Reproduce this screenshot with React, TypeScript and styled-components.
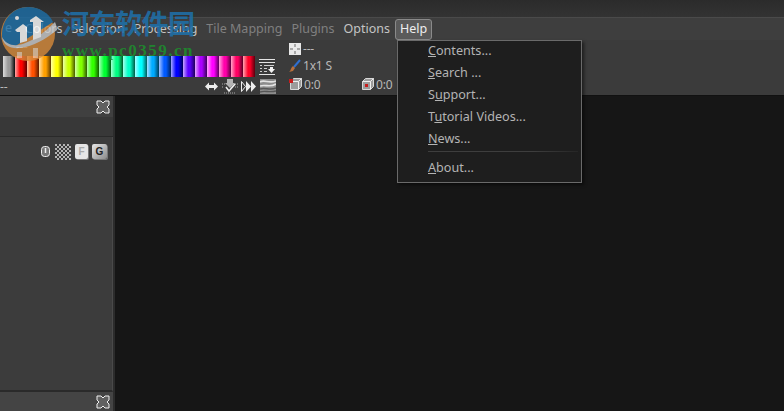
import React from "react";
import styled, { createGlobalStyle } from "styled-components";

const GlobalStyle = createGlobalStyle`
  html, body {
    margin: 0;
    padding: 0;
    background: #161616;
    overflow: hidden;
  }
  * { box-sizing: border-box; }
`;

const Window = styled.div`
  position: relative;
  width: 784px;
  height: 411px;
  overflow: hidden;
  display: flex;
  flex-direction: column;
  background: #161616;
  font-family: "Noto Sans", "Open Sans", sans-serif;
  font-size: 13px;
`;

const TitleBar = styled.div`
  height: 18px;
  flex: none;
  background: linear-gradient(#2b2b2b, #333333);
  border-bottom: 1px solid #4a4a4a;
`;

const MenuBar = styled.div`
  height: 22px;
  flex: none;
  display: flex;
  align-items: center;
  gap: 1px;
  padding-left: 21px;
  background: #3e3e3e;
  font-size: 12.5px;
`;

const MenuItem = styled.div<{ $dim?: boolean; $open?: boolean }>`
  height: 21px;
  padding: 0 ${(p) => (p.$open ? "4px" : "3px")};
  line-height: 18px;
  white-space: nowrap;
  color: ${(p) => (p.$open ? "#eeeeee" : p.$dim ? "#808080" : "#c4c4c4")};
  background: ${(p) => (p.$open ? "#5a5a5a" : "transparent")};
  border: 1px solid ${(p) => (p.$open ? "#8a8a8a" : "transparent")};
  border-radius: 3px;
`;

const ClippedMenuLabel = styled.span`
  position: absolute;
  left: 5px;
  top: 18px;
  line-height: 20px;
  font-size: 12.5px;
  color: #c4c4c4;
`;

const Toolbar = styled.div`
  height: 56px;
  flex: none;
  display: flex;
  background: #3b3b3b;
  border-bottom: 1px solid #111111;
  color: #b8b8b8;
  font-size: 12px;
`;

const PaletteBlock = styled.div`
  width: 289px;
  flex: none;
  display: flex;
  flex-direction: column;
`;

const TopDashes = styled.div`
  height: 16px;
  padding-left: 16px;
  line-height: 14px;
`;

const PaletteRow = styled.div`
  display: flex;
  align-items: center;
  height: 21px;
  padding-left: 3px;
`;

const Swatch = styled.div<{ $color: string; $end: string }>`
  width: 12px;
  height: 21px;
  flex: none;
  background: linear-gradient(
    to right,
    rgba(255, 255, 255, 0.65) 0%,
    rgba(255, 255, 255, 0) 42%,
    rgba(0, 0, 0, 0) 58%,
    ${(p) => p.$end} 100%
  ), ${(p) => p.$color};
`;

const ToolIcon = styled.svg<{ $gap?: number }>`
  flex: none;
  margin-left: ${(p) => p.$gap ?? 0}px;
`;

const ActionRow = styled.div`
  display: flex;
  align-items: center;
  height: 17px;
  margin-top: 1px;
`;

const LeftDashes = styled.span`
  margin-right: auto;
  line-height: 14px;
`;

const Actions = styled.div`
  display: flex;
  align-items: center;
  padding-right: 13px;
`;

const InfoBlock = styled.div`
  display: flex;
  flex-direction: column;
`;

const InfoRow = styled.div`
  height: 17px;
  display: flex;
  align-items: center;
  gap: 2px;
  line-height: 17px;
  letter-spacing: -0.2px;

  &:last-child {
    margin-top: 2px;
    gap: 0;
  }
`;

const InfoCell = styled.div`
  width: 72px;
  display: flex;
  align-items: center;
  gap: 2px;
`;

const Body = styled.div`
  flex: 1;
  display: flex;
  min-height: 0;
`;

const SidePanel = styled.div`
  width: 115px;
  flex: none;
  display: flex;
  flex-direction: column;
  background: #3d3d3d;
  border-right: 2px solid #2c2c2c;
`;

const PanelHeader = styled.div`
  height: 21px;
  flex: none;
  display: flex;
  align-items: center;
  justify-content: flex-end;
  padding-right: 3px;
  background: #404040;
`;

const PanelStrip = styled.div`
  height: 20px;
  flex: none;
  background: #383838;
  border-bottom: 1px solid #2a2a2a;
`;

const PanelContent = styled.div`
  flex: 1;
  display: flex;
  justify-content: flex-end;
  align-items: flex-start;
  gap: 4px;
  padding: 7px 5px 0 0;
  background: #3c3c3c;
  border-right: 1px solid #4a4a4a;
  border-bottom: 2px solid #2a2a2a;
`;

const PanelFooter = styled(PanelHeader)`
  height: 19px;
  background: #444444;
`;

const MainArea = styled.div`
  flex: 1;
  background: #161616;
`;

const Dropdown = styled.div`
  position: absolute;
  left: 397px;
  top: 40px;
  width: 185px;
  height: 143px;
  background: #1e1e1e;
  border: 1px solid #6a6a6a;
  box-shadow: 2px 2px 3px rgba(0, 0, 0, 0.5);
`;

const DropdownItem = styled.div`
  height: 22px;
  padding-left: 30px;
  line-height: 20px;
  color: #b4b4b4;
  font-size: 12.6px;
  white-space: nowrap;
`;

const DropdownSeparator = styled.div`
  height: 1px;
  margin: 0 3px 6px 30px;
  background: linear-gradient(to right, #3e3e3e, #3e3e3e 70%, #262626);
`;

const Watermark = styled.div`
  position: absolute;
  left: 0;
  top: 5px;
  width: 210px;
  height: 60px;
  pointer-events: none;
`;

const WatermarkLogo = styled.svg`
  position: absolute;
  left: 0;
  top: 0;
  opacity: 0.8;
`;

const WatermarkTitle = styled.div`
  position: absolute;
  left: 62px;
  top: 3px;
  color: #1f6fa8;
  font-family: "Noto Sans CJK SC", sans-serif;
  font-size: 27px;
  font-weight: 700;
  line-height: 30px;
  letter-spacing: -0.5px;
  white-space: nowrap;
  opacity: 0.88;
`;

const WatermarkUrl = styled.div`
  position: absolute;
  left: 62px;
  top: 37px;
  color: #1f8a2e;
  font-family: "Liberation Serif", serif;
  font-size: 17px;
  font-weight: 700;
  line-height: 18px;
  letter-spacing: 1.5px;
  white-space: nowrap;
  opacity: 0.9;
`;

const LetterIcon = styled.span<{ $dark?: boolean }>`
  width: ${(p) => (p.$dark ? 15 : 13)}px;
  height: 15px;
  flex: none;
  display: flex;
  align-items: center;
  justify-content: center;
  border-radius: 2px;
  font-family: "Liberation Sans", sans-serif;
  font-size: 10px;
  font-weight: 700;
  color: ${(p) => (p.$dark ? "#222222" : "#aaaaaa")};
  background: ${(p) => (p.$dark ? "linear-gradient(135deg, #e8e8e8, #8a8a8a)" : "#e6e6e6")};
  box-shadow: 1px 1px 0 #777777;
`;

const LockSlot = styled.span`
  display: flex;
  margin-right: 1px;
  padding-top: 2px;
`;

const swatches: [string, string][] = [
  ["#9a9a9a", "rgba(0,0,0,0.95)"],
  ["#ff0000", "rgba(0,0,0,0.65)"],
  ["#ff5000", "rgba(0,0,0,0.65)"],
  ["#ffa000", "rgba(0,0,0,0.65)"],
  ["#ffff00", "rgba(0,0,0,0.65)"],
  ["#c8ff00", "rgba(0,0,0,0.65)"],
  ["#82ff00", "rgba(0,0,0,0.65)"],
  ["#32ff00", "rgba(0,0,0,0.65)"],
  ["#00ff32", "rgba(0,0,0,0.65)"],
  ["#00ff82", "rgba(0,0,0,0.65)"],
  ["#00ffc8", "rgba(0,0,0,0.65)"],
  ["#00ffff", "rgba(0,0,0,0.65)"],
  ["#00aaff", "rgba(0,0,0,0.65)"],
  ["#005aff", "rgba(0,0,0,0.65)"],
  ["#0000ff", "rgba(0,0,0,0.65)"],
  ["#5a00ff", "rgba(0,0,0,0.65)"],
  ["#aa00ff", "rgba(0,0,0,0.65)"],
  ["#ff00ff", "rgba(0,0,0,0.65)"],
  ["#ff00aa", "rgba(0,0,0,0.65)"],
  ["#ff0064", "rgba(0,0,0,0.65)"],
  ["#ff0028", "rgba(0,0,0,0.65)"],
];

const CloseIcon = () => (
  <svg width="14" height="14" viewBox="0 0 14 14">
    <path
      d="M1 1h4l2 2 2-2h4v4l-2 2 2 2v4h-4l-2-2-2 2H1V9l2-2-2-2z"
      fill="#606060"
      stroke="#eeeeee"
      strokeWidth="1"
    />
  </svg>
);

const PaletteMenuIcon = () => (
  <ToolIcon $gap={4} width="16" height="17" viewBox="0 0 16 17">
    <path d="M0 1.500h16M0 4.500h16" stroke="#e4e4e4" strokeWidth="1" />
    <path d="M1 7.500h2M1 10.500h2M1 13.500h2M5 7.500h10M5 10.500h3M5 13.500h3" stroke="#cfcfcf" strokeWidth="1" />
    <path d="M0 16.500h16" stroke="#e4e4e4" strokeWidth="1" />
    <path d="M11 9h3v2h2l-3.500 4L9 11h2z" fill="#f2f2f2" />
  </ToolIcon>
);

const TextureIcon = () => (
  <ToolIcon $gap={4} width="16" height="15" viewBox="0 0 16 15">
    <rect width="16" height="15" fill="#8c8c8c" />
    <path d="M0 3c4-3 9 2 16-1M0 7c5-2 10 2 16-2" stroke="#e2e2e2" strokeWidth="1.600" fill="none" />
    <path d="M0 10c5-2 10 2 16-1M0 13c5-2 9 1 16-1" stroke="#555555" strokeWidth="1.400" fill="none" />
  </ToolIcon>
);

const ArrowsIcon = () => (
  <ToolIcon width="13" height="11" viewBox="0 0 13 11">
    <path d="M0 5.500L4 1.500v2.500h5V1.500l4 4-4 4V7H4v2.500z" fill="#eeeeee" />
  </ToolIcon>
);

const CheckIcon = () => (
  <ToolIcon $gap={4} width="16" height="15" viewBox="0 0 16 15">
    <path d="M0 5h3M0 8h2M13 8h3M13 5h3M2 14h12" stroke="#aaaaaa" strokeWidth="1" strokeDasharray="1 1" />
    <path d="M5 0h6v4h2l-5 5-5-5h2z" fill="#b4b4b4" />
    <path d="M4 8l3 4 6-7" stroke="#f0f0f0" strokeWidth="1.600" fill="none" />
  </ToolIcon>
);

const ForwardIcon = () => (
  <ToolIcon $gap={3} width="15" height="13" viewBox="0 0 15 13">
    <path d="M0.500 1.500l4 5-4 5z" fill="none" stroke="#eeeeee" />
    <path d="M5 1l5 5.500-5 5.500zM10 1l5 5.500-5 5.500z" fill="#eeeeee" />
  </ToolIcon>
);

const SelectionIcon = () => (
  <svg width="12" height="12" viewBox="0 0 12 12">
    <rect width="12" height="12" fill="#e8e8e8" />
    <path d="M6 1v3M6 8v3M1 6h3M8 6h3" stroke="#666666" strokeWidth="1" />
  </svg>
);

const BrushIcon = () => (
  <svg width="12" height="14" viewBox="0 0 12 14">
    <path d="M11 1L5 8" stroke="#2f6fd0" strokeWidth="2" />
    <path d="M4 7l2 2-2 3-4 1c2-1 1-3 4-6z" fill="#b86f3c" />
  </svg>
);

const CubeIcon = ({ $mark }: { $mark: "corner" | "center" }) => (
  <svg width="13" height="13" viewBox="0 0 13 13">
    <path d="M1.500 3.500l3-3h8v8l-3 3h-8z" fill="#9c9c9c" stroke="#d8d8d8" />
    <path d="M1.500 3.500h8v8M9.500 3.500l3-3" stroke="#eeeeee" fill="none" />
    {$mark === "corner" ? (
      <rect x="0" y="1" width="4" height="4" fill="#c81c1c" />
    ) : (
      <rect x="4" y="6" width="3" height="3" fill="#c81c1c" />
    )}
  </svg>
);

const LockIcon = () => (
  <svg width="9" height="11" viewBox="0 0 9 11">
    <rect x="0.500" y="0.500" width="8" height="10" rx="3" fill="#777777" stroke="#eeeeee" />
    <path d="M4.500 2v5" stroke="#eeeeee" strokeWidth="1.500" />
  </svg>
);

const CheckerIcon = () => (
  <svg width="16" height="16" viewBox="0 0 16 16">
    <rect width="16" height="16" fill="#3a3a3a" />
    {Array.from({ length: 64 }, (_, i) =>
      (i % 8 + Math.floor(i / 8)) % 2 === 0 ? (
        <rect key={i} x={(i % 8) * 2} y={Math.floor(i / 8) * 2} width="2" height="2" fill="#b4b4b4" />
      ) : null
    )}
  </svg>
);

export default function App() {
  return (
    <>
      <GlobalStyle />
      <Window>
        <TitleBar />
        <MenuBar>
          <MenuItem>Colors</MenuItem>
          <MenuItem>Selection</MenuItem>
          <MenuItem>Processing</MenuItem>
          <MenuItem $dim>Tile Mapping</MenuItem>
          <MenuItem $dim>Plugins</MenuItem>
          <MenuItem>Options</MenuItem>
          <MenuItem $open>Help</MenuItem>
        </MenuBar>
        <ClippedMenuLabel>e</ClippedMenuLabel>
        <Toolbar>
          <PaletteBlock>
            <TopDashes>---</TopDashes>
            <PaletteRow>
              {swatches.map(([c, end]) => (
                <Swatch key={c} $color={c} $end={end} />
              ))}
              <PaletteMenuIcon />
            </PaletteRow>
            <ActionRow>
              <LeftDashes>--</LeftDashes>
              <Actions>
                <ArrowsIcon />
                <CheckIcon />
                <ForwardIcon />
                <TextureIcon />
              </Actions>
            </ActionRow>
          </PaletteBlock>
          <InfoBlock>
            <InfoRow>
              <SelectionIcon />
              ---
            </InfoRow>
            <InfoRow>
              <BrushIcon />
              1x1 S
            </InfoRow>
            <InfoRow>
              <InfoCell>
                <CubeIcon $mark="corner" />
                0:0
              </InfoCell>
              <InfoCell>
                <CubeIcon $mark="center" />
                0:0
              </InfoCell>
            </InfoRow>
          </InfoBlock>
        </Toolbar>
        <Body>
          <SidePanel>
            <PanelHeader>
              <CloseIcon />
            </PanelHeader>
            <PanelStrip />
            <PanelContent>
              <LockSlot>
                <LockIcon />
              </LockSlot>
              <CheckerIcon />
              <LetterIcon>F</LetterIcon>
              <LetterIcon $dark>G</LetterIcon>
            </PanelContent>
            <PanelFooter>
              <CloseIcon />
            </PanelFooter>
          </SidePanel>
          <MainArea />
        </Body>

        <Dropdown>
          <DropdownItem><u>C</u>ontents...</DropdownItem>
          <DropdownItem><u>S</u>earch ...</DropdownItem>
          <DropdownItem>S<u>u</u>pport...</DropdownItem>
          <DropdownItem>T<u>u</u>torial Videos...</DropdownItem>
          <DropdownItem><u>N</u>ews...</DropdownItem>
          <DropdownSeparator />
          <DropdownItem><u>A</u>bout...</DropdownItem>
        </Dropdown>

        <Watermark>
          <WatermarkLogo width="58" height="58" viewBox="0 0 58 58">
            <circle cx="28" cy="29" r="27" fill="#d68a3a" />
            <path d="M2 32C1 15 13 2 28 2c11 0 21 6 25 15L14 42C7 41 3 37 2 32z" fill="#1c6fa8" />
            <path d="M2 32c3 6 9 9 16 8 13-2 26-12 37-23 1 3 2 5 2 8C46 34 32 42 20 43 10 44 3 40 2 32z" fill="#cbcbcb" />
            <path d="M15 25l8-6 4 3v14l-7 2V27h-3z" fill="#ffffff" />
            <path d="M30 15l6-4 8 6h-3v15l-8 3V17h-3z" fill="#ffffff" />
            <circle cx="17" cy="13" r="2" fill="#ffffff" />
            <path d="M17 47h5v6h-5zM33 43h5v10h-5z" fill="#ffffff" opacity="0.55" />
          </WatermarkLogo>
          <WatermarkTitle>河东软件园</WatermarkTitle>
          <WatermarkUrl>www.pc0359.cn</WatermarkUrl>
        </Watermark>
      </Window>
    </>
  );
}
